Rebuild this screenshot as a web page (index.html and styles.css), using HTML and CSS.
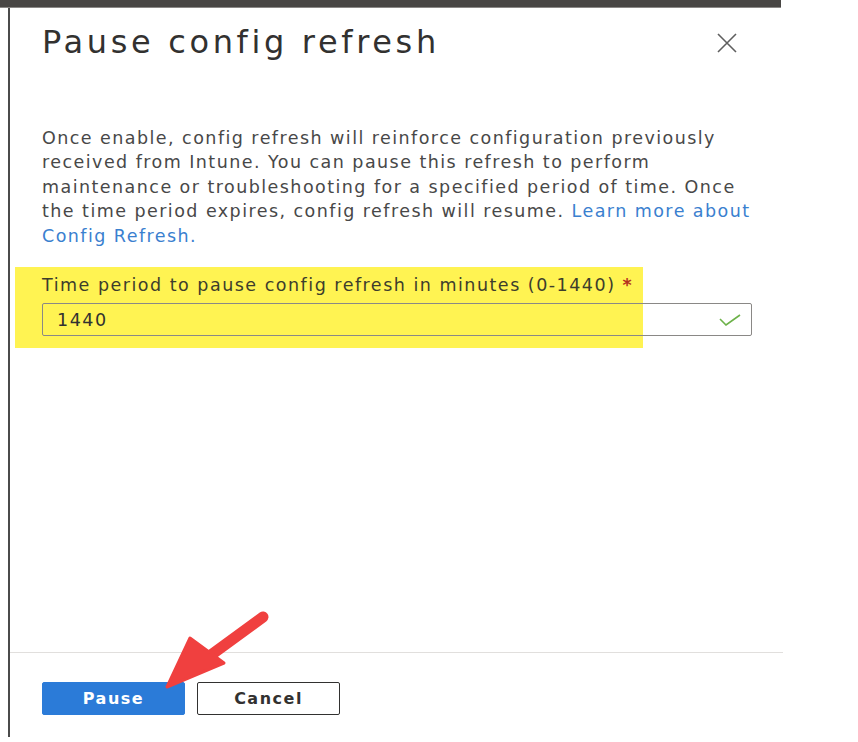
FILE: index.html
```html
<!DOCTYPE html>
<html lang="en">
<head>
    <meta charset="UTF-8">
    <meta name="viewport" content="width=device-width, initial-scale=1.0">
    <title>Pause config refresh</title>
    <link rel="stylesheet" href="styles.css">
</head>
<body>
    <div class="topbar"></div>

    <div class="panel">
        <div class="panel-header">
            <h1>Pause config refresh</h1>
            <svg class="close" width="20" height="20" viewBox="0 0 20 20">
                <path d="M1 1 L19 19 M19 1 L1 19" stroke="#5f5f5f" stroke-width="1.6" fill="none"/>
            </svg>
        </div>

        <p class="intro">
            Once enable, config refresh will reinforce configuration previously<br>
            received from Intune. You can pause this refresh to perform<br>
            maintenance or troubleshooting for a specified period of time. Once<br>
            the time period expires, config refresh will resume. <a href="#">Learn more about<br>
            Config Refresh.</a>
        </p>

        <div class="field">
            <div class="highlight"></div>
            <label for="minutes">Time period to pause config refresh in minutes (0-1440) <span class="req">*</span></label>
            <div class="input-wrap">
                <input id="minutes" type="text" value="1440">
                <svg class="check" width="22" height="12" viewBox="0 0 22 12">
                    <path d="M1 5 L7 11 L21 1" stroke="#6db24a" stroke-width="1.6" fill="none"/>
                </svg>
            </div>
        </div>

        <div class="panel-footer">
            <button class="btn primary">Pause</button>
            <button class="btn">Cancel</button>
        </div>

        <!-- annotation arrow -->
        <svg class="arrow" width="120" height="90" viewBox="0 0 120 90">
            <path d="M104 12 L52 50" stroke="#f0403f" stroke-width="11" stroke-linecap="round" fill="none"/>
            <path d="M8 82 L31 33 L65 58 Z" fill="#f0403f" stroke="#f0403f" stroke-width="3" stroke-linejoin="round"/>
        </svg>
    </div>
</body>
</html>
```

FILE: styles.css
```css
body {
    margin: 0;
    background: #fff;
    font-family: "DejaVu Sans", "Noto Sans", sans-serif;
    color: #3b3a39;
}

.topbar {
    width: 781px;
    height: 7px;
    background: #484644;
    border-bottom: 1px solid #8a8886;
}

.panel {
    position: relative;
    margin-left: 8px;
    width: 773px;
    height: 729px;
    border-left: 2px solid #4b4b4b;
    display: flex;
    flex-direction: column;
}

.panel-header {
    display: flex;
    align-items: center;
    justify-content: space-between;
    padding: 15px 46px 0 32px;
}

.panel-header h1 {
    margin: 0;
    font-size: 32px;
    font-weight: 400;
    line-height: 38px;
    color: #323130;
    letter-spacing: 3.65px;
}

.close {
    margin-top: 2px;
}

.intro {
    margin: 65px 0 0 32px;
    width: 770px;
    font-size: 17.5px;
    line-height: 24.4px;
    letter-spacing: 1.45px;
    color: #484848;
}

.intro a {
    color: #3a80cf;
    text-decoration: none;
}

.field {
    position: relative;
    margin: 25px 0 0 32px;
    width: 710px;
}

.highlight {
    position: absolute;
    left: -27px;
    top: -6px;
    width: 628px;
    height: 81px;
    background: #fff352;
}

.field label {
    position: relative;
    display: block;
    font-size: 17.5px;
    line-height: 24px;
    letter-spacing: 1.5px;
    color: #3d3d2c;
}

.req {
    color: #b5301f;
    font-weight: 700;
}

.input-wrap {
    position: relative;
    margin-top: 6px;
}

.input-wrap input {
    box-sizing: border-box;
    width: 710px;
    height: 33px;
    padding: 0 14px;
    border: 1px solid #8a8886;
    border-radius: 2px;
    background: transparent;
    font-family: inherit;
    font-size: 17.5px;
    letter-spacing: 1.5px;
    color: #323130;
}

.check {
    position: absolute;
    right: 11px;
    top: 11px;
}

.panel-footer {
    margin-top: auto;
    margin-bottom: 22px;
    border-top: 1px solid #e1dfdd;
    padding: 29px 0 0 32px;
    display: flex;
    gap: 12px;
}

.btn {
    box-sizing: border-box;
    width: 143px;
    height: 33px;
    border: 1px solid #323130;
    border-radius: 2px;
    background: #fff;
    font-family: inherit;
    font-size: 16px;
    font-weight: 700;
    letter-spacing: 1.5px;
    color: #323130;
}

.btn.primary {
    background: #2b7bd8;
    border-color: #2b7bd8;
    color: #fff;
}

.arrow {
    position: absolute;
    left: 149px;
    top: 597px;
}
```
